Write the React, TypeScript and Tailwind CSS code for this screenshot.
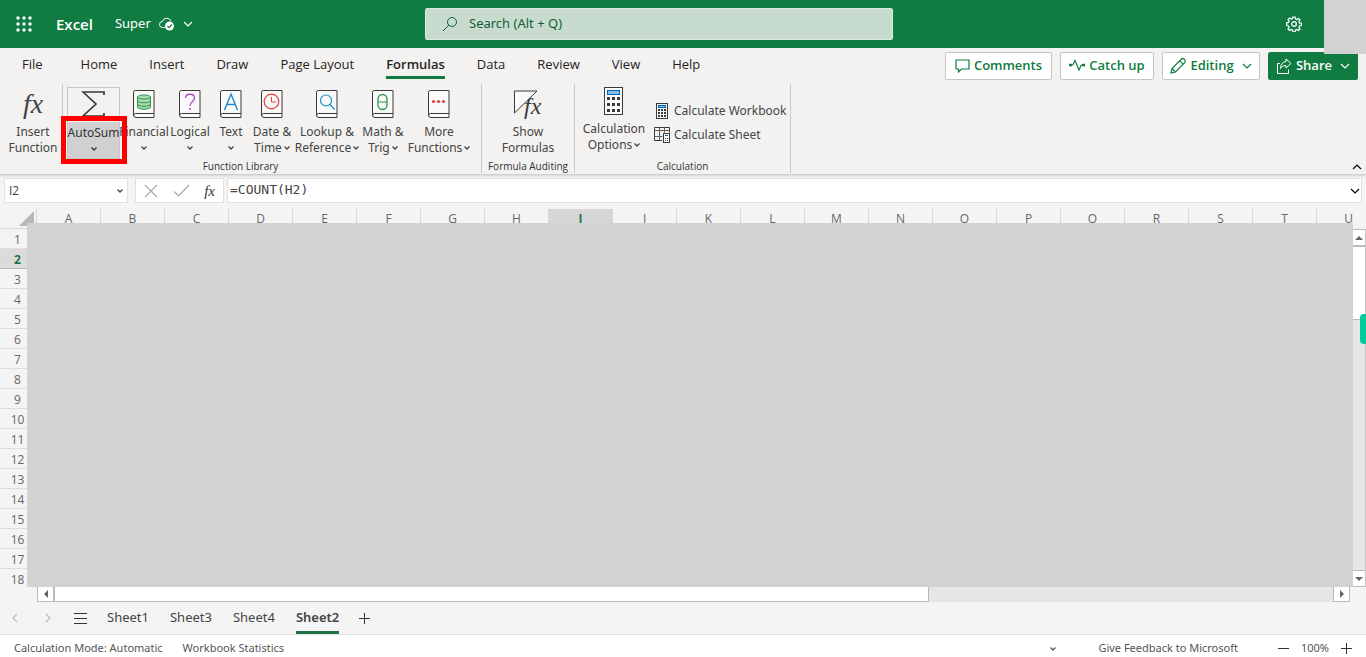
import React from "react";
import clsx from "clsx";

const TABS = ["File", "Home", "Insert", "Draw", "Page Layout", "Formulas", "Data", "Review", "View", "Help"];
const COLUMNS = "ABCDEFGHIJKLMNOPQRSTU".split("");
const ROWS = Array.from({ length: 18 }, (_, i) => i + 1);
const SHEETS = ["Sheet1", "Sheet3", "Sheet4", "Sheet2"];

function Chevron({ className }: { className?: string }) {
  return (
    <svg viewBox="0 0 10 6" className={clsx("shrink-0 fill-none stroke-current", className)} aria-hidden="true">
      <path d="M1 1l4 4 4-4" strokeWidth="1.2" />
    </svg>
  );
}

function SmallChevron() {
  return (
    <svg viewBox="0 0 6 4" className="inline-block h-1 w-1.5 fill-none stroke-current" aria-hidden="true">
      <path d="M.5 .5L3 3 5.500 .5" strokeWidth="1.3" />
    </svg>
  );
}

function Fx({ className }: { className?: string }) {
  return (
    <span className={clsx("font-['Liberation_Serif',serif] italic", className)} aria-hidden="true">
      fx
    </span>
  );
}

function BookIcon({ children }: { children: React.ReactNode }) {
  return (
    <svg width="22" height="28" viewBox="0 0 22 28" fill="none" aria-hidden="true">
      <path d="M.5 25V2.500a2 2 0 0 1 2-2h18.500v27H3a2.500 2.500 0 0 1-2.500-2.500z" fill="#fafafa" stroke="#3b3a39" />
      <path d="M.5 25.500a2 2 0 0 1 2-2h18.500" stroke="#3b3a39" />
      {children}
    </svg>
  );
}

function CalculatorIcon() {
  return (
    <svg width="20" height="28" viewBox="0 0 20 28" aria-hidden="true">
      <rect x=".5" y=".5" width="18" height="27" fill="#fafafa" stroke="#3b3a39" />
      <rect x="3.500" y="3.500" width="12" height="4" fill="#83beec" stroke="#0063b1" />
      {[11.5, 17.5, 23.5].map((y) => (
        <path key={y} d={`M3 ${y}h3M8 ${y}h3M13 ${y}h3`} stroke="#3b3a39" strokeWidth="3" />
      ))}
    </svg>
  );
}

function SmallCalculatorIcon() {
  return (
    <svg width="12" height="16" viewBox="0 0 12 16" aria-hidden="true">
      <rect x=".5" y=".5" width="11" height="15" fill="#fafafa" stroke="#3b3a39" />
      <rect x="2.500" y="2.500" width="7" height="2" fill="#83beec" stroke="#0063b1" />
      {[7, 10, 13].map((y) => (
        <path key={y} d={`M2 ${y}h2M5 ${y}h2M8 ${y}h2`} stroke="#3b3a39" strokeWidth="2" />
      ))}
    </svg>
  );
}

function SheetIcon() {
  return (
    <svg width="16" height="16" viewBox="0 0 16 16" fill="none" aria-hidden="true">
      <path d="M8 13.500H.5V.5h15v5" stroke="#3b3a39" />
      <path d="M.5 3.500h15M.5 9.500h8M5.500 .5v13M10.500 .5v5" stroke="#605e5c" />
      <rect x="9.500" y="6.500" width="6" height="9" fill="#fff" stroke="#3b3a39" />
      <path d="M11 8.500h3" stroke="#0063b1" />
      <path d="M11 11.500h1m1 0h1m-3 2h1m1 0h1" stroke="#3b3a39" />
    </svg>
  );
}

interface RibbonButtonProps {
  width: string;
  icon: React.ReactNode;
  lines: string[];
  menu?: boolean;
}

function RibbonButton({ width, icon, lines, menu }: RibbonButtonProps) {
  return (
    <button className={clsx("flex shrink-0 flex-col items-center text-[#444]", width)}>
      <span className="flex h-7 items-center justify-center">{icon}</span>
      <span className="mt-1.5 flex flex-col items-center whitespace-nowrap font-['Noto_Sans',sans-serif] text-[12px] leading-4">
        <span>{lines[0]}</span>
        <span className="flex h-4 items-center gap-0.5">
          {lines[1]}
          {menu && <SmallChevron />}
        </span>
      </span>
    </button>
  );
}

function RibbonGroup({ label, width, children }: { label: string; width: string; children: React.ReactNode }) {
  return (
    <section aria-label={label} className={clsx("flex h-[89px] shrink-0 flex-col border-r border-[#c8c6c4]", width)}>
      <div className="flex h-[78px] items-start">{children}</div>
      <div className="text-center text-[10px] leading-[14px] text-[#333]">{label}</div>
    </section>
  );
}

function Header() {
  return (
    <header className="relative flex h-12 shrink-0 items-center bg-[#107c41] text-white">
      <button aria-label="App launcher" className="ml-4">
        <svg width="16" height="16" viewBox="0 0 16 16" fill="currentColor">
          {[2, 8, 14].map((y) => [2, 8, 14].map((x) => <circle key={`${x}-${y}`} cx={x} cy={y} r="1.700" />))}
        </svg>
      </button>
      <span className="ml-6 text-[15px] font-semibold">Excel</span>
      <button className="ml-[22px] flex items-center font-['Noto_Sans',sans-serif] text-[13px]">
        Super
        <svg width="16" height="14" viewBox="0 0 16 14" fill="none" className="ml-2">
          <path d="M6 10.500H3.500a3 3 0 0 1 0-6A4.500 4.500 0 0 1 12 4" stroke="currentColor" />
          <circle cx="10.500" cy="9" r="4.500" fill="currentColor" />
          <path d="M8.500 9.200l1.500 1.500 2.800-3.200" stroke="#107c41" strokeWidth="1.200" />
        </svg>
        <Chevron className="ml-2 h-1.5 w-2.5" />
      </button>
      <label className="absolute inset-x-0 top-2 mx-auto flex h-8 w-[468px] -translate-x-6 items-center rounded-xs border border-[#dbe9e0] bg-[#c7dccf] pl-4 text-[#185c37]">
        <svg width="16" height="16" viewBox="0 0 16 16" fill="none" stroke="currentColor">
          <circle cx="10" cy="6" r="4.500" />
          <path d="M6.800 9.200L1 15" />
        </svg>
        <input
          type="search"
          aria-label="Search"
          placeholder="Search (Alt + Q)"
          className="ml-[11px] flex-1 bg-transparent font-['Noto_Sans',sans-serif] text-[13px] outline-none placeholder:text-[#185c37]"
        />
      </label>
      <button aria-label="Settings" className="mr-16 ml-auto">
        <svg width="16" height="16" viewBox="0 0 16 16" fill="none" stroke="currentColor" strokeWidth="1.300">
          <path d="M6.800 .8h2.400l.4 2 1.300.5 1.700-1.100 1.700 1.700-1.100 1.700.5 1.300 2 .4v2.400l-2 .4-.5 1.300 1.100 1.700-1.700 1.700-1.700-1.100-1.300.5-.4 2H6.800l-.4-2-1.300-.5-1.700 1.100-1.700-1.700 1.100-1.700-.5-1.300-2-.4V6.800l2-.4.5-1.300-1.100-1.700 1.700-1.700 1.700 1.100 1.300-.5z" transform="translate(.4 .4) scale(.95)" />
          <circle cx="8" cy="8" r="2.300" />
        </svg>
      </button>
      <div className="absolute top-0 right-0 z-10 h-[54px] w-[42px] bg-[#d2d2d2]" />
    </header>
  );
}

function TabRow() {
  const action = "flex h-7 items-center justify-center gap-1 rounded-xs border text-[13px] font-semibold";
  return (
    <div className="flex h-9 items-start">
      <nav className="flex pl-1.5 text-[13px] text-[#252423]">
        {TABS.map((tab) => (
          <button key={tab} className={clsx("px-4", tab === "File" && "mr-1.5")}>
            <span
              className={clsx(
                "block h-[31px] leading-8",
                tab === "Formulas" && "border-b-3 border-[#107c41] font-semibold",
              )}
            >
              {tab}
            </span>
          </button>
        ))}
      </nav>
      <div className="mt-1 mr-2 ml-auto flex gap-2 text-[#107c41]">
        <button className={clsx(action, "w-[107px] border-[#c8c6c4] bg-white")}>
          <svg width="15" height="14" viewBox="0 0 15 14" fill="none" stroke="currentColor" strokeWidth="1.200">
            <path d="M1 1h13v9H6.500L3.500 13v-3H1z" />
          </svg>
          Comments
        </button>
        <button className={clsx(action, "w-[94px] border-[#c8c6c4] bg-white")}>
          <svg width="16" height="14" viewBox="0 0 16 14" fill="none" stroke="currentColor" strokeWidth="1.200">
            <path d="M1.500 6h2.300L6 1.500l4 9.500 2.300-5h2.200" />
            <circle cx="1.500" cy="6" r="1" fill="currentColor" />
            <circle cx="14.500" cy="6" r="1" fill="currentColor" />
          </svg>
          Catch up
        </button>
        <button className={clsx(action, "w-[98px] border-[#c8c6c4] bg-white")}>
          <svg width="16" height="16" viewBox="0 0 16 16" fill="none" stroke="currentColor" strokeWidth="1.200">
            <path d="M1 15l1-4.500L11 1.500a2.300 2.300 0 0 1 3.500 3.300L5.500 14z" />
            <path d="M9.800 2.800l3.400 3.400M2 10.500L5.500 14" />
          </svg>
          Editing
          <Chevron className="ml-1 h-1.5 w-2.5" />
        </button>
        <button className={clsx(action, "w-[90px] border-[#107c41] bg-[#107c41] text-white")}>
          <svg width="16" height="16" viewBox="0 0 16 16" fill="none" stroke="currentColor">
            <path d="M4 5.500H1.500v10h11v-4" />
            <path d="M10 1l5 4.500-5 4.500V7.500c-3 0-4.500 1-5.500 3 0-4 2-6.500 5.500-7z" />
          </svg>
          Share
          <Chevron className="ml-1 h-1.5 w-2.5" />
        </button>
      </div>
    </div>
  );
}

function FunctionLibrary() {
  return (
    <RibbonGroup label="Function Library" width="w-[482px]">
      <div className="flex h-[74px] w-[63px] border-r border-[#c8c6c4] pt-1.5 pl-1">
        <RibbonButton width="w-[58px]" icon={<Fx className="text-[28px]" />} lines={["Insert", "Function"]} />
      </div>
      <div className="relative ml-1 h-[74px] w-[53px] pt-[3px]">
        <button className="flex h-[72px] w-full flex-col items-center border border-[#c8c6c4] text-[#333]">
          <svg width="25" height="34" viewBox="0 0 25 34" className="shrink-0" fill="none" stroke="#3b3a39" strokeWidth="1.700">
            <path d="M23 7V4H2l13 12L2 28h21v-3" />
          </svg>
          <span className="flex w-full flex-1 flex-col items-center bg-[#d0d0d0] pt-[3px] font-['Noto_Sans',sans-serif] text-[12px] leading-4 whitespace-nowrap">
            <span>AutoSum</span>
            <span className="flex h-4 items-center">
              <SmallChevron />
            </span>
          </span>
        </button>
        <div className="absolute top-8 -left-1.5 h-12 w-[66px] border-5 border-[#ff0000]" />
      </div>
      <div className="flex pt-1.5">
        <RibbonButton
          width="w-12"
          menu
          lines={["Financial", ""]}
          icon={
            <BookIcon>
              <path d="M4.500 7v10c0 3 13 3 13 0V7" fill="#a8dcb0" stroke="#2e9447" />
              <ellipse cx="11" cy="7" rx="6.500" ry="2" fill="#a8dcb0" stroke="#2e9447" />
              <path d="M4.500 10.500c0 3 13 3 13 0M4.500 14c0 3 13 3 13 0" stroke="#2e9447" />
            </BookIcon>
          }
        />
        <RibbonButton
          width="w-11"
          menu
          lines={["Logical", ""]}
          icon={
            <BookIcon>
              <path d="M6.500 8c0-5 9-5 9 0 0 3.500-4.500 3.500-4.500 8" stroke="#b146c2" strokeWidth="1.300" />
              <path d="M11 18v2" stroke="#b146c2" strokeWidth="1.500" />
            </BookIcon>
          }
        />
        <RibbonButton
          width="w-[38px]"
          menu
          lines={["Text", ""]}
          icon={
            <BookIcon>
              <path d="M4.500 20L11 4l6.500 16M7 14.500h8" stroke="#1e8bcd" strokeWidth="1.400" />
            </BookIcon>
          }
        />
        <RibbonButton
          width="w-11"
          menu
          lines={["Date &", "Time"]}
          icon={
            <BookIcon>
              <circle cx="10.500" cy="11.500" r="7.300" stroke="#e8393d" strokeWidth="1.200" />
              <path d="M10.500 7v5H15" stroke="#e8393d" />
            </BookIcon>
          }
        />
        <RibbonButton
          width="w-[66px]"
          menu
          lines={["Lookup &", "Reference"]}
          icon={
            <BookIcon>
              <circle cx="10" cy="10.500" r="5.500" stroke="#1e8bcd" strokeWidth="1.200" />
              <path d="M14 14.500l4.500 5" stroke="#1e8bcd" strokeWidth="1.200" />
            </BookIcon>
          }
        />
        <RibbonButton
          width="w-[46px]"
          menu
          lines={["Math &", "Trig"]}
          icon={
            <BookIcon>
              <rect x="6" y="4.500" width="9" height="15" rx="4.500" stroke="#2e9447" strokeWidth="1.300" />
              <path d="M6 12h9" stroke="#2e9447" />
            </BookIcon>
          }
        />
        <RibbonButton
          width="w-[66px]"
          menu
          lines={["More", "Functions"]}
          icon={
            <BookIcon>
              <circle cx="5.500" cy="11.500" r="1.600" fill="#e8393d" />
              <circle cx="10.500" cy="11.500" r="1.600" fill="#e8393d" />
              <circle cx="15.500" cy="11.500" r="1.600" fill="#e8393d" />
            </BookIcon>
          }
        />
      </div>
    </RibbonGroup>
  );
}

function Ribbon() {
  return (
    <div className="flex h-[91px] border-b border-[#d2d0ce] shadow-sm">
      <FunctionLibrary />
      <RibbonGroup label="Formula Auditing" width="w-[93px]">
        <div className="flex w-full justify-center pt-1.5">
          <RibbonButton
            width="w-[60px]"
            lines={["Show", "Formulas"]}
            icon={
              <svg width="30" height="30" viewBox="0 0 30 30" fill="none" aria-hidden="true">
                <path d="M1.500 24V2H24z" fill="#fafafa" stroke="#3b3a39" />
                <text x="11" y="25" fill="#3b3a39" fontFamily="Liberation Serif, serif" fontStyle="italic" fontSize="24">
                  fx
                </text>
              </svg>
            }
          />
        </div>
      </RibbonGroup>
      <RibbonGroup label="Calculation" width="w-[216px]">
        <div className="flex items-start pt-[3px] pl-1.5">
          <RibbonButton width="w-[66px]" menu icon={<CalculatorIcon />} lines={["Calculation", "Options"]} />
          <div className="ml-[7px] flex flex-col gap-2 pt-4 font-['Noto_Sans',sans-serif] text-[12px] leading-4 text-[#444]">
            <button className="flex items-center gap-1 whitespace-nowrap">
              <span className="flex w-4 justify-center">
                <SmallCalculatorIcon />
              </span>
              Calculate Workbook
            </button>
            <button className="flex items-center gap-1 whitespace-nowrap">
              <SheetIcon />
              Calculate Sheet
            </button>
          </div>
        </div>
      </RibbonGroup>
      <button aria-label="Collapse ribbon" className="mt-auto mr-1 mb-1 ml-auto">
        <Chevron className="h-1.5 w-2.5 rotate-180" />
      </button>
    </div>
  );
}

function FormulaBar() {
  const box = "flex h-[25px] items-center border border-[#e1e1e1] bg-white";
  return (
    <div className="flex h-[34px] shrink-0 items-start px-1 pt-[3px]">
      <div className={clsx(box, "w-[124px] pr-1")}>
        <input aria-label="Name box" defaultValue="I2" className="w-full bg-transparent pl-1 text-[12px] text-[#444] outline-none" />
        <button aria-label="Name box options" className="flex text-[#444]">
          <SmallChevron />
        </button>
      </div>
      <div className={clsx(box, "ml-[7px] w-[89px] justify-between px-2")}>
        <button aria-label="Cancel">
          <svg width="14" height="14" viewBox="0 0 14 14" stroke="#aaa" strokeWidth="1.200">
            <path d="M1 1l12 12M13 1L1 13" />
          </svg>
        </button>
        <button aria-label="Enter">
          <svg width="17" height="14" viewBox="0 0 17 14" fill="none" stroke="#aaa" strokeWidth="1.200">
            <path d="M1 7.500l4.500 4.500L16 1" />
          </svg>
        </button>
        <button aria-label="Insert function" className="leading-none text-[#333]">
          <Fx className="text-[15px]" />
        </button>
      </div>
      <div className={clsx(box, "ml-[3px] flex-1 pr-px")}>
        <input
          aria-label="Formula"
          defaultValue="=COUNT(H2)"
          className="h-5 flex-1 self-start bg-transparent pl-0.5 font-['DejaVu_Sans_Mono',monospace] text-[13px] text-[#444] outline-none"
        />
        <button aria-label="Expand formula bar">
          <Chevron className="h-1.5 w-2.5" />
        </button>
      </div>
    </div>
  );
}

function Grid() {
  return (
    <div className="flex min-h-0 flex-1">
      <div className="relative min-w-0 flex-1 overflow-hidden">
        <table className="w-[1381px] table-fixed border-separate border-spacing-0 text-[12px] leading-[19px] text-[#666]">
          <thead>
            <tr>
              <th className="w-[37px] border-r border-b border-[#d8d8d8] p-0">
                <svg width="15" height="15" className="mr-0.5 ml-auto" aria-hidden="true">
                  <path d="M15 0v15H0z" fill="#b8b8b8" />
                </svg>
              </th>
              {COLUMNS.map((col) => (
                <th
                  key={col}
                  scope="col"
                  className={clsx(
                    "h-5 w-16 border-r border-b border-[#d8d8d8] p-0",
                    col === "I" ? "bg-[#d6d6d6] font-bold text-[#217346]" : "font-normal",
                  )}
                >
                  {col}
                </th>
              ))}
            </tr>
          </thead>
          <tbody>
            {ROWS.map((row) => (
              <tr key={row}>
                <th
                  scope="row"
                  className={clsx(
                    "h-5 border-b p-0 pt-0.5 pr-0.5 leading-[17px]",
                    row === 2 ? "border-[#b8b8b8] bg-[#dcdbd9] font-bold text-[#217346]" : "border-[#dedede] font-normal",
                  )}
                >
                  {row}
                </th>
                <td colSpan={COLUMNS.length} />
              </tr>
            ))}
          </tbody>
        </table>
        <div className="absolute top-3.5 right-0 bottom-0 left-[27px] bg-[#d2d2d2]" />
      </div>
      <div className="relative mt-5 flex w-[13px] flex-col border-r border-[#c8c8c8] bg-[#e6e6e6]">
        <button aria-label="Scroll up" className="flex h-[17px] items-center justify-center border-y border-[#b8bbbe] bg-white">
          <svg width="8" height="4">
            <path d="M4 0l4 4H0z" fill="#666" />
          </svg>
        </button>
        <div className="h-[74px] border-y border-[#b8bbbe] bg-white" />
        <button aria-label="Scroll down" className="mt-auto flex h-[17px] items-center justify-center border-y border-[#b8bbbe] bg-white">
          <svg width="8" height="4">
            <path d="M0 0h8L4 4z" fill="#666" />
          </svg>
        </button>
        <div className="absolute top-[85px] -right-px h-[30px] w-1.5 rounded-l bg-[#00cc99]" />
      </div>
    </div>
  );
}

function SheetBar() {
  return (
    <>
      <div className="mr-4 ml-[37px] flex h-[15px] shrink-0 bg-[#e6e6e6]">
        <button aria-label="Scroll left" className="flex w-[17px] items-center justify-center border border-t-0 border-[#b8bbbe] bg-white">
          <svg width="4" height="8">
            <path d="M4 0v8L0 4z" fill="#666" />
          </svg>
        </button>
        <div className="w-2/3 border border-t-0 border-[#b8bbbe] bg-white" />
        <button aria-label="Scroll right" className="ml-auto flex w-[17px] items-center justify-center border border-t-0 border-[#b8bbbe] bg-white">
          <svg width="4" height="8">
            <path d="M0 0v8l4-4z" fill="#666" />
          </svg>
        </button>
      </div>
      <div className="flex h-8 shrink-0 items-center font-['Noto_Sans',sans-serif] text-[13px] text-[#444]">
        <button aria-label="Previous sheet" className="ml-2.5 text-[#bbb]">
          <Chevron className="h-1.5 w-2.5 rotate-90" />
        </button>
        <button aria-label="Next sheet" className="ml-[23px] text-[#bbb]">
          <Chevron className="h-1.5 w-2.5 -rotate-90" />
        </button>
        <button aria-label="All sheets" className="ml-[21px]">
          <svg width="13" height="11" stroke="#333">
            <path d="M0 .5h13M0 5.500h13M0 10.500h13" />
          </svg>
        </button>
        <div className="ml-5 flex gap-[21px]">
          {SHEETS.map((sheet) => (
            <button
              key={sheet}
              className={clsx("h-8 border-b-3 pt-0.5", sheet === "Sheet2" ? "border-[#217346] font-semibold" : "border-transparent")}
            >
              {sheet}
            </button>
          ))}
        </div>
        <button aria-label="Add sheet" className="ml-5">
          <svg width="11" height="11" stroke="#333">
            <path d="M5.500 0v11M0 5.500h11" />
          </svg>
        </button>
      </div>
    </>
  );
}

function StatusBar() {
  return (
    <footer className="flex h-[23px] shrink-0 items-center border-t border-[#e1e1e1] bg-white pt-1 pr-3.5 pl-3.5 font-['Noto_Sans',sans-serif] text-[11px] text-[#555]">
      <button>Calculation Mode: Automatic</button>
      <button className="ml-5">Workbook Statistics</button>
      <button aria-label="Status bar options" className="mr-[42px] ml-auto">
        <SmallChevron />
      </button>
      <button>Give Feedback to Microsoft</button>
      <button aria-label="Zoom out" className="ml-10">
        <svg width="11" height="11" stroke="#333">
          <path d="M0 5.500h11" />
        </svg>
      </button>
      <button className="ml-3">100%</button>
      <button aria-label="Zoom in" className="ml-3">
        <svg width="11" height="11" stroke="#333">
          <path d="M5.500 0v11M0 5.500h11" />
        </svg>
      </button>
    </footer>
  );
}

export default function App() {
  return (
    <div className="flex h-screen flex-col overflow-hidden bg-[#f4f4f4] font-['Open_Sans','Noto_Sans',sans-serif]">
      <Header />
      <div className="shrink-0 bg-[#f3f2f1]">
        <TabRow />
        <Ribbon />
      </div>
      <FormulaBar />
      <Grid />
      <SheetBar />
      <StatusBar />
    </div>
  );
}
